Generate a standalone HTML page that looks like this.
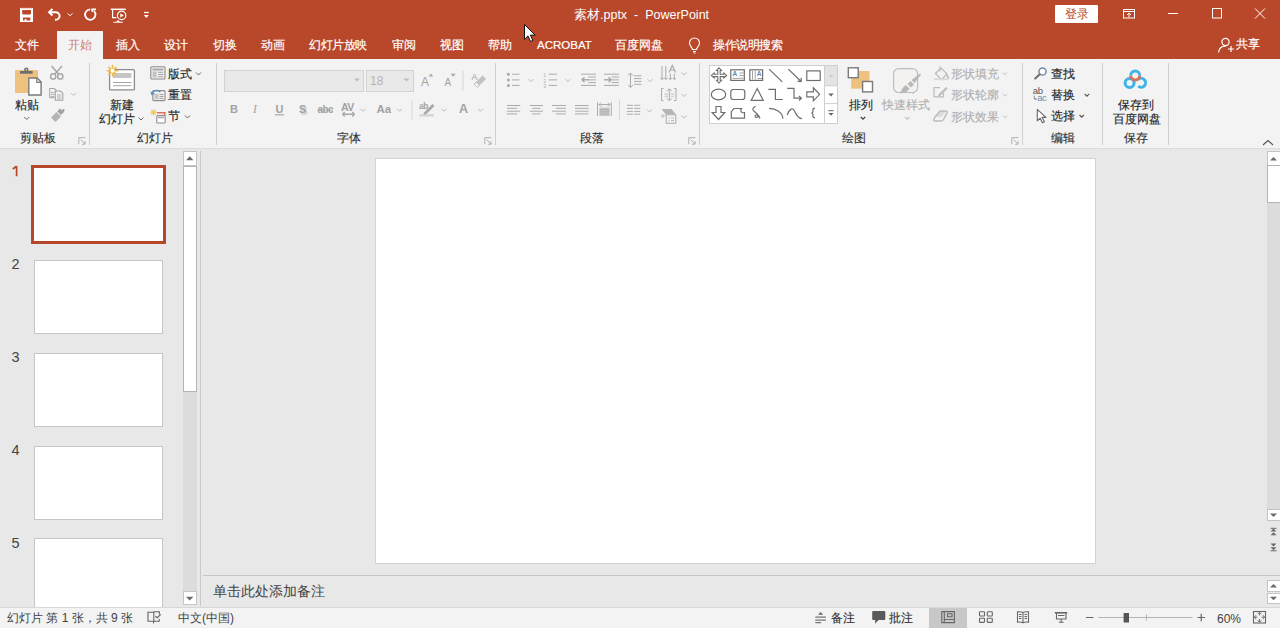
<!DOCTYPE html>
<html><head><meta charset="utf-8">
<style>
*{box-sizing:border-box;margin:0;padding:0}
html,body{width:1280px;height:628px;overflow:hidden;background:#e8e8e8;font-family:"Liberation Sans",sans-serif;position:relative}
.a{position:absolute}
.t{position:absolute;white-space:nowrap;line-height:1}
#title{left:0;top:0;width:1280px;height:59px;background:#b9482b}
#tabsel{left:57px;top:31px;width:46px;height:29px;background:#f3f3f3}
.tab{color:#fff;font-size:12px;top:39px;-webkit-text-stroke:0.2px #fff}
#ribbon{left:0;top:59px;width:1280px;height:89px;background:#f3f3f3}
.vs{position:absolute;width:1px;background:#d0d0d0}
.gl{font-size:12px;color:#333;top:132px;-webkit-text-stroke:0.15px #333}
.rt{font-size:12px;color:#262626;-webkit-text-stroke:0.15px #262626}
.dis{color:#b0b0b0;-webkit-text-stroke:0.15px #b0b0b0}
.dis{color:#b0b0b0}
#pane{left:0;top:149px;width:200px;height:457px;background:#e8e8e8}
.thumb{position:absolute;background:#fff;border:1px solid #c6c6c6}
.num{position:absolute;font-size:14.5px;color:#444;line-height:1}
#status{left:0;top:606px;width:1280px;height:22px;background:#f3f3f3}
.st{font-size:12px;color:#444;top:611px}
</style></head><body>
<div id="title" class="a"></div>
<div id="tabsel" class="a"></div>
<!-- QAT -->
<svg class="a" style="left:0;top:0" width="160" height="31" viewBox="0 0 160 31">
 <path d="M20 8h13v14h-13z M22.2 10h8.8v3.6c0 .5-.3.8-.8.8h-7.2c-.5 0-.8-.3-.8-.8z M23 17.4h7.3v3h-3.8v-1.5h-1.8v1.5h-1.7z" fill="#fff" fill-rule="evenodd"/>
 <path d="M20.5 8.3h12" stroke="#e8b9aa" stroke-width="0.8"/>
 <g fill="none" stroke="#fff" stroke-width="1.9">
  <path d="M49.5 12.2h6.3a3.8 3.8 0 0 1 0 7.6h-0.8"/>
  <path d="M52.5 8.9l-3.5 3.3 3.5 3.3"/>
 </g>
 <path d="M67.7 13.4l2.4 2.4 2.4-2.4" fill="none" stroke="#fff" stroke-width="1"/>
 <g fill="none" stroke="#fff" stroke-width="1.8">
  <path d="M93.8 10.8a5.2 5.2 0 1 1 -3.6 -1.4"/>
  <path d="M92.2 8.6v3.2M91.6 9.4h4.4"/>
 </g>
 <g fill="none" stroke="#fff">
  <path d="M110.8 9.3h14.9" stroke-width="1.5"/>
  <path d="M112.6 9.8v7.9h3.8" stroke-width="1.2"/>
  <circle cx="121.6" cy="15.4" r="4.2" stroke-width="1.2"/>
  <path d="M113.4 22.3h9.4M116.5 22.3l1.6-1.6 1.6 1.6" stroke-width="1.1"/>
 </g>
 <path d="M120.3 13.2v4.4l3.4-2.2z" fill="#fff"/>
 <path d="M143.9 12.5h4.9" stroke="#fff" stroke-width="1.3"/>
 <path d="M143.9 15.1h4.9l-2.45 2.9z" fill="#fff"/>
</svg>
<div class="t" style="left:574px;top:9px;font-size:12.5px;color:#fff">素材.pptx&nbsp; - &nbsp;PowerPoint</div>
<div class="a" style="left:1055px;top:5px;width:43px;height:18px;background:#fff;border-radius:1px"></div>
<div class="t" style="left:1065px;top:8px;font-size:12px;color:#b7472a">登录</div>
<svg class="a" style="left:1110px;top:0" width="170" height="60" viewBox="1110 0 170 60" fill="none" stroke="#fff" stroke-width="1">
 <rect x="1123.5" y="9.5" width="11" height="8.5"/><path d="M1124 11.5h10M1129 17.5v-4.5M1127 15l2-2 2 2"/>
 <path d="M1168 13.5h10"/>
 <rect x="1212.5" y="8.5" width="9" height="9.5"/>
 <path d="M1255 8.5l10 10M1265 8.5l-10 10"/>
 <circle cx="1225.5" cy="42" r="3.6" stroke-width="1.2"/><path d="M1218.5 52.5c.5-4 3.3-6.3 7-6.3" stroke-width="1.2"/><path d="M1231 46v6M1228 49h6" stroke-width="1.2"/>
</svg>
<div class="t" style="left:1236px;top:38px;font-size:12px;color:#fff;-webkit-text-stroke:0.2px #fff">共享</div>
<!-- tabs -->
<div class="t tab" style="left:15px">文件</div>
<div class="t tab" style="left:68px;color:#b7472a">开始</div>
<div class="t tab" style="left:116px">插入</div>
<div class="t tab" style="left:164px">设计</div>
<div class="t tab" style="left:213px">切换</div>
<div class="t tab" style="left:261px">动画</div>
<div class="t tab" style="left:309px;letter-spacing:-0.4px">幻灯片放映</div>
<div class="t tab" style="left:392px">审阅</div>
<div class="t tab" style="left:440px">视图</div>
<div class="t tab" style="left:488px">帮助</div>
<div class="t tab" style="left:537px;font-size:11.5px;top:40px">ACROBAT</div>
<div class="t tab" style="left:615px">百度网盘</div>
<div class="t tab" style="left:713px;letter-spacing:-0.5px">操作说明搜索</div>
<svg class="a" style="left:685px;top:36px" width="20" height="20" fill="none" stroke="#fff" stroke-width="1.1">
 <path d="M7.5 13.5c0-2-3-3.3-3-6.5a5 5 0 0 1 10 0c0 3.2-3 4.5-3 6.5z"/><path d="M8 15.5h3M8.5 17h2"/>
</svg>
<!-- ribbon -->
<div id="ribbon" class="a"></div>
<div class="a" style="left:0;top:148px;width:1280px;height:1px;background:#dcdcdc"></div>
<!-- font boxes -->
<div class="a" style="left:224px;top:70px;width:140px;height:22px;background:#e9e9e9;border:1px solid #d2d2d2"></div>
<div class="a" style="left:366px;top:70px;width:48px;height:22px;background:#e9e9e9;border:1px solid #d2d2d2"></div>
<div class="t" style="left:370px;top:75px;font-size:12px;color:#b5b5b5">18</div>
<!-- separators -->
<div class="vs" style="left:89px;top:63px;height:82px"></div>
<div class="vs" style="left:216px;top:63px;height:82px"></div>
<div class="vs" style="left:495px;top:63px;height:82px"></div>
<div class="vs" style="left:699px;top:63px;height:82px"></div>
<div class="vs" style="left:1022px;top:63px;height:82px"></div>
<div class="vs" style="left:1102px;top:63px;height:82px"></div>
<div class="vs" style="left:1168px;top:63px;height:82px"></div>
<!-- group labels -->
<div class="t gl" style="left:20px">剪贴板</div>
<div class="t gl" style="left:137px">幻灯片</div>
<div class="t gl" style="left:337px">字体</div>
<div class="t gl" style="left:580px">段落</div>
<div class="t gl" style="left:842px">绘图</div>
<div class="t gl" style="left:1051px">编辑</div>
<div class="t gl" style="left:1124px">保存</div>
<!-- ribbon icons -->
<svg class="a" style="left:0;top:0" width="1280" height="150" viewBox="0 0 1280 150">
<defs>
 <path id="car" d="M0 0l2.5 2.5 2.5-2.5" fill="none" stroke="#666" stroke-width="1"/>
 <path id="card" d="M0 0l2.5 2.5 2.5-2.5" fill="none" stroke="#bcbcbc" stroke-width="1"/>
</defs>
<!-- paste -->
<rect x="15" y="70" width="23" height="23" rx="1.2" fill="#eec27e"/>
<path d="M20 71h12.6v2.7h-12.6z" fill="#6b6e73"/>
<circle cx="26.3" cy="69.6" r="2.2" fill="#6b6e73"/><circle cx="26.3" cy="69.6" r="0.9" fill="#eec27e"/>
<path d="M28.8 78h8.3l4 4v13h-12.3z" fill="#fff" stroke="#7a7a7a" stroke-width="1.4"/>
<path d="M36.8 78v4.4h4.2" fill="none" stroke="#7a7a7a" stroke-width="1.2"/>
<use href="#car" x="24.3" y="117"/>
<!-- scissors -->
<g fill="none" stroke="#a8a8a8" stroke-width="1.5">
 <path d="M51.5 66l7.3 8.2M62 66l-7.3 8.2"/>
 <circle cx="53.2" cy="76.4" r="2.6"/><circle cx="60.3" cy="76.4" r="2.6"/>
</g>
<!-- copy -->
<g fill="#f3f3f3" stroke="#a8a8a8" stroke-width="1.1">
 <path d="M49.7 88.5h4.6l2.3 2.3v7h-6.9z"/>
 <path d="M55.3 91h5.2l2.3 2.3v7h-7.5z"/>
</g>
<g stroke="#a8a8a8" stroke-width="0.9"><path d="M51 92.5h3.5M51 94.5h3.5M51 96.5h3M57 95h4.3M57 97h4.3M57 99h4.3"/></g>
<use href="#card" x="71" y="93"/>
<!-- format painter -->
<g fill="#b4b4b4">
 <path d="M51 117.5l5.5-5.5 4.5 4.5-5.5 5.5z" />
 <path d="M57.3 111.3l2.7-2.7 3.6 3.6-2.7 2.7z" fill="#a0a0a0"/>
 <path d="M61.5 110l2.2-1 1 1-1 2.2z" fill="#9a9a9a"/>
</g>
<!-- new slide -->
<rect x="109.6" y="69.7" width="24.8" height="20.2" rx="1" fill="#fff" stroke="#8c8c8c" stroke-width="1.3"/>
<rect x="113" y="73" width="18.4" height="5" fill="#c6c6c6"/>
<path d="M113 82.5h18.4M113 85.7h18.4" stroke="#9a9a9a" stroke-width="0.9"/>
<g stroke="#f2b94d" stroke-width="1.6" stroke-linecap="round">
 <path d="M112.5 65.6v10.4M107.3 70.8h10.4M108.9 67.2l7.2 7.2M116.1 67.2l-7.2 7.2"/>
</g>
<circle cx="112.5" cy="70.8" r="2" fill="#fff"/>
<use href="#car" x="138.5" y="117.5"/>
<!-- layout -->
<rect x="150.8" y="66.8" width="14.2" height="12.2" rx="1" fill="#f0f0f0" stroke="#8c8c8c" stroke-width="1.1"/>
<rect x="152.5" y="68.5" width="10.8" height="2" fill="#a8a8a8"/>
<rect x="152.5" y="71.5" width="4.2" height="6" fill="#c4c4c4"/>
<path d="M158 72.3h5.3M158 74.5h5.3M158 76.7h5.3" stroke="#9a9a9a" stroke-width="0.9"/>
<use href="#car" x="196" y="72.5"/>
<!-- reset -->
<rect x="152.8" y="90.6" width="12.2" height="10" rx="1" fill="#f0f0f0" stroke="#8c8c8c" stroke-width="1.1"/>
<rect x="154.5" y="94" width="4" height="5.2" fill="#c4c4c4"/>
<path d="M159.5 94.5h4M159.5 96.5h4M159.5 98.5h4" stroke="#9a9a9a" stroke-width="0.9"/>
<path d="M151.5 94.5c0.5-4 6-5.5 8.8-2.4" fill="none" stroke="#5e8fbd" stroke-width="1.5"/>
<path d="M150.3 91.5l1.3 3.8 3.6-1.6z" fill="#5e8fbd"/>
<!-- section -->
<g stroke="#f2c462" stroke-width="1.1" stroke-linecap="round">
 <path d="M153.5 109.5v5.6M150.7 112.3h5.6M151.5 110.3l4 4M155.5 110.3l-4 4"/>
</g>
<path d="M157 112.8h7.8v2.5" fill="none" stroke="#e0705e" stroke-width="1.6"/>
<rect x="156.8" y="115.6" width="8.4" height="7.4" rx="0.8" fill="#fff" stroke="#8c8c8c" stroke-width="1.1"/>
<rect x="158" y="116.8" width="6" height="1.6" fill="#b0b0b0"/>
<use href="#car" x="185" y="115.5"/>
</svg>
<!-- font group glyphs -->
<div class="t" style="left:230px;top:104px;font-size:11px;font-weight:bold;color:#a2a2a2">B</div>
<div class="t" style="left:253px;top:104px;font-size:11.5px;font-style:italic;font-family:'Liberation Serif',serif;color:#a2a2a2">I</div>
<div class="t" style="left:275.5px;top:104px;font-size:11px;font-weight:bold;color:#a2a2a2">U</div>
<div class="t" style="left:299px;top:104px;font-size:11px;font-weight:bold;color:#a2a2a2;text-shadow:1.5px 1.5px 1px #cfcfcf">S</div>
<div class="t" style="left:317.5px;top:105px;font-size:10px;font-weight:bold;color:#a2a2a2;letter-spacing:-0.6px">abc</div>
<div class="t" style="left:341px;top:102px;font-size:10.5px;font-weight:bold;color:#a2a2a2;letter-spacing:-0.6px">AV</div>
<div class="t" style="left:376.5px;top:104px;font-size:11.5px;font-weight:bold;color:#a2a2a2">Aa</div>
<div class="t" style="left:459px;top:103px;font-size:12.5px;font-weight:bold;color:#a2a2a2">A</div>
<div class="t" style="left:421px;top:76px;font-size:12px;color:#a2a2a2">A</div>
<div class="t" style="left:444.5px;top:78px;font-size:10px;color:#a2a2a2">A</div>
<div class="t" style="left:419px;top:102px;font-size:8.5px;font-weight:bold;color:#a2a2a2;letter-spacing:-0.4px">ab</div>
<div class="t" style="left:471.5px;top:73px;font-size:9px;color:#a2a2a2">A</div>
<svg class="a" style="left:0;top:0" width="1280" height="150" viewBox="0 0 1280 150">
 <path d="M354 78.5l3 3 3-3z" fill="#bdbdbd"/>
 <path d="M403.5 78.5l3 3 3-3z" fill="#bdbdbd"/>
 <path d="M428.7 76.5l2.2-3 2.2 3z" fill="#a8a8a8"/>
 <path d="M450.6 73.8h5.2l-2.6 3z" fill="#a8a8a8"/>
 <rect x="462.5" y="71" width="1" height="20" fill="#d6d6d6"/>
 <rect x="411.5" y="100.5" width="1" height="19" fill="#d6d6d6"/>
 <path d="M476 82l6.5-6.5 3.5 3.5-6.5 6.5z" fill="#c2c2c2"/>
 <path d="M474 84l2-2 3.5 3.5-2 2z" fill="none" stroke="#c2c2c2" stroke-width="1"/>
 <rect x="275" y="114.2" width="9" height="1.2" fill="#a8a8a8"/>
 <rect x="317.5" y="109.6" width="15.5" height="1" fill="#a8a8a8"/>
 <path d="M342.5 114.2h12M342.5 114.2l2.2-2.2M342.5 114.2l2.2 2.2M354.5 114.2l-2.2-2.2M354.5 114.2l-2.2 2.2" stroke="#a8a8a8" stroke-width="1.4" fill="none"/>
 <path d="M424 112.5l8.5-8.5 2 2-8.5 8.5-2.8.8z" fill="#a8a8a8"/>
 <rect x="419.5" y="114.2" width="14.5" height="2.3" fill="#d4d4d4"/>
 <use href="#card" x="360.5" y="108.8"/>
 <use href="#card" x="397" y="108.8"/>
 <use href="#card" x="441.3" y="108.8"/>
 <use href="#card" x="478" y="108.8"/>
 <!-- launchers -->
 <g fill="none" stroke="#a8a8a8" stroke-width="0.9">
  <path d="M78.8 144.2v-6.5h6.5M80.8 139.7l4.2 4.2M85 141.2v3h-3"/>
  <path d="M484.8 144.2v-6.5h6.5M486.8 139.7l4.2 4.2M491 141.2v3h-3"/>
  <path d="M688.8 144.2v-6.5h6.5M690.8 139.7l4.2 4.2M695 141.2v3h-3"/>
  <path d="M1011.8 144.2v-6.5h6.5M1013.8 139.7l4.2 4.2M1018 141.2v3h-3"/>
 </g>
 <path d="M1263 145l5-4.5 5 4.5" fill="none" stroke="#555" stroke-width="1.1"/>
</svg>
<!-- paragraph icons -->
<svg class="a" style="left:0;top:0" width="1280" height="150" viewBox="0 0 1280 150">
<g fill="#a8a8a8">
 <circle cx="508.4" cy="74.2" r="1.5"/><circle cx="508.4" cy="79.9" r="1.5"/><circle cx="508.4" cy="85.4" r="1.5"/>
</g>
<g stroke="#ababab" stroke-width="1" fill="none">
 <path d="M512 74.2h7.6M512 79.9h7.6M512 85.4h7.6"/>
 <path d="M548.7 74.2h8.4M548.7 79.9h8.4M548.7 85.4h8.4"/>
 <path d="M581 74.2h15M588.3 77h7.7M588.3 79.9h7.7M588.3 82.6h7.7M581 85.4h15"/>
 <path d="M589 79.8h-7M584.5 77.3l-2.6 2.5 2.6 2.5" stroke-width="1.4"/>
 <path d="M604 74.2h15M611.5 77h7.5M611.5 79.9h7.5M611.5 82.6h7.5M604 85.4h15"/>
 <path d="M604 79.8h7M608.5 77.3l2.6 2.5-2.6 2.5" stroke-width="1.4"/>
 <path d="M630.5 73v14.5M628 75.5l2.5-2.5 2.5 2.5M628 85l2.5 2.5 2.5-2.5"/>
 <path d="M634 75.8h7.5M634 78.6h7.5M634 81.4h7.5M634 84.3h7.5"/>
 <path d="M662 66v13.5M665.8 66v13.5M660.3 77.8l1.7 1.8 1.7-1.8M664.1 77.8l1.7 1.8 1.7-1.8M670.3 73.5v6M674.3 73.5v6M668.8 78l1.5 1.6 1.5-1.6M672.8 78l1.5 1.6 1.5-1.6"/>
 <path d="M669 72.5l3.3-7 3.3 7M670.2 70h4.2" stroke-width="1.2"/>
 <path d="M663.5 88.5h-2v12h2M674 88.5h2v12h-2M669.3 89v11M667 91l2.3-2.3 2.3 2.3M667 98.5l2.3 2.3 2.3-2.3"/>
 <path d="M664.5 94h3.5M670.8 94h3.5M664.5 96.2h3.5M670.8 96.2h3.5" stroke="#c4c4c4"/>
 <path d="M506.9 105.5h13.3M506.9 108.3h10.1M506.9 111.2h13.3M506.9 113.9h10.1"/>
 <path d="M529.8 105.5h13.2M532.2 108.3h8.4M529.8 111.2h13.2M532.2 113.9h8.4"/>
 <path d="M552 105.5h13.9M555.8 108.3h10.1M552 111.2h13.9M555.8 113.9h10.1"/>
 <path d="M575 105.5h13.6M575 108.3h13.6M575 111.2h13.6M575 113.9h13.6"/>
 <path d="M597.5 102.3v13.7M611.3 102.3v13.7M599 104.6h11M601 102.6l-2 2 2 2M608 102.6l2 2-2 2"/>
 <path d="M627 105.3h6M627 108.4h6M627 111.4h6M627 114.2h6M634.2 105.3h6M634.2 108.4h6M634.2 111.4h6M634.2 114.2h6"/>
</g>
<rect x="599.5" y="107.5" width="10" height="8.5" fill="#c8c8c8"/>
<path d="M599.5 109.5h10M599.5 111.8h10M599.5 114h10" stroke="#a8a8a8" stroke-width="0.8"/>
<rect x="619" y="100.2" width="1" height="19.4" fill="#d6d6d6"/>
<text x="543.5" y="77" font-size="4.5" fill="#a8a8a8" font-family="Liberation Sans">1</text>
<text x="543.5" y="82.5" font-size="4.5" fill="#a8a8a8" font-family="Liberation Sans">2</text>
<text x="543.5" y="88" font-size="4.5" fill="#a8a8a8" font-family="Liberation Sans">3</text>
<!-- smartart -->
<path d="M661.5 109h10l4 5h-10z" fill="#b4b4b4"/>
<path d="M661.5 114.5h4l-2 3h-2z" fill="#c8c8c8"/>
<rect x="666.2" y="114.8" width="9.6" height="8.4" fill="#f3f3f3" stroke="#a8a8a8" stroke-width="1"/>
<path d="M668.5 118h1M671 118h3M668.5 120.5h1M671 120.5h3" stroke="#a8a8a8" stroke-width="0.8"/>
<use href="#card" x="528.6" y="79.2"/>
<use href="#card" x="565.4" y="79.2"/>
<use href="#card" x="647.6" y="79.2"/>
<use href="#card" x="681.7" y="72.5"/>
<use href="#card" x="681.7" y="94"/>
<use href="#card" x="681.7" y="115.5"/>
<use href="#card" x="647" y="109.5"/>
</svg>
<!-- drawing/editing icons -->
<svg class="a" style="left:0;top:0" width="1280" height="150" viewBox="0 0 1280 150">
 <!-- arrange -->
 <path d="M851.2 71h18.3v17.7h-18.3z" fill="#eec27e"/>
 <rect x="848.3" y="67.8" width="9.9" height="9.9" fill="#fff" stroke="#7a7a7a" stroke-width="1.4"/>
 <rect x="862.6" y="81.5" width="9.9" height="10.4" fill="#fff" stroke="#7a7a7a" stroke-width="1.4"/>
 <path d="M860.8 117l2.2 2.2 2.2-2.2" fill="none" stroke="#444" stroke-width="1.3"/>
 <!-- quick styles -->
 <rect x="893.6" y="68.7" width="24" height="23.8" rx="5" fill="#f4f1f1" stroke="#bdbdbd" stroke-width="1.2"/>
 <path d="M900 93.5c1.5-4 3-6.5 6-8.5l3.5 3.5c-2 3-4.5 4.5-9.5 5z" fill="#b8b8b8"/>
 <path d="M907.5 84l3-3 3.5 3.5-3 3z" fill="#b8b8b8"/>
 <path d="M911.5 80l8.5-6.5 1 1-6.5 8.5z" fill="#b8b8b8"/>
 <path d="M916 91c-1 1.5-2.5 2.5-4 3" fill="none" stroke="#d0d0d0" stroke-width="1"/>
 <path d="M905 117l2.2 2.2 2.2-2.2" fill="none" stroke="#c4c4c4" stroke-width="1.1"/>
 <!-- shape fill -->
 <path d="M935.5 73.5l5.5-5.5 6 6-5.5 5.5z" fill="none" stroke="#bcbcbc" stroke-width="1.3"/>
 <path d="M940 66.5v5" stroke="#bcbcbc" stroke-width="1.2"/>
 <path d="M946.5 74.5c1.5 1.5 2 3 1.5 4.5" stroke="#bcbcbc" stroke-width="1.6" fill="none"/>
 <rect x="934" y="78.3" width="14.5" height="1.8" fill="#dadada"/>
 <!-- shape outline -->
 <path d="M940 87.6h-6v9.3h9.5v-4" fill="none" stroke="#bcbcbc" stroke-width="1.2"/>
 <path d="M938.5 94.5l7.5-7.5 1.6 1.6-7.5 7.5-2.3.7z" fill="#bcbcbc"/>
 <!-- shape effects -->
 <path d="M935 117l5-6h6.5l-5 6z" fill="#dcdcdc"/>
 <path d="M935 117l5-6h6c1 0 1.5 1 1 2l-3.5 6.5c-.5 1-1.5 1.5-2.5 1.5h-6c-1 0-1.5-1-1-2z" fill="none" stroke="#bcbcbc" stroke-width="1.5"/>
 <g fill="none" stroke="#c4c4c4" stroke-width="1"><path d="M1002.7 72.5l2.2 2.2 2.2-2.2M1002.7 94l2.2 2.2 2.2-2.2M1002.7 115.5l2.2 2.2 2.2-2.2"/></g>
 <!-- find -->
 <circle cx="1042.5" cy="71.5" r="3.6" fill="#fff" stroke="#6e8aa6" stroke-width="1.5"/>
 <path d="M1039.8 74.3l-4.6 4.3" stroke="#6e6e6e" stroke-width="2" stroke-linecap="round"/>
 <!-- replace -->
 <text x="1032.8" y="94.3" font-size="9.5" font-family="Liberation Sans" fill="#555" letter-spacing="-0.4">ab</text>
 <text x="1037.2" y="100.9" font-size="9.5" font-family="Liberation Sans" fill="#6a8cb2" letter-spacing="-0.4">ac</text>
 <path d="M1034.3 95.5v3.5h2M1035.3 98l1 1-1 1" fill="none" stroke="#777" stroke-width="0.8"/>
 <path d="M1084.6 93.8l2.3 2.3 2.3-2.3" fill="none" stroke="#555" stroke-width="1.1"/>
 <!-- select -->
 <path d="M1037.3 109.3v11.5l2.8-2.6 2.3 4.5 2-1-2.3-4.3h3.8z" fill="#fff" stroke="#666" stroke-width="1.1" stroke-linejoin="round"/>
 <path d="M1079.5 115l2.2 2.2 2.2-2.2" fill="none" stroke="#555" stroke-width="1.1"/>
 <!-- baidu -->
 <g fill="none" stroke-width="3">
  <circle cx="1129.6" cy="83" r="4.5" stroke="#3eb4e8"/>
  <path d="M1138.2 86.2a4.5 4.5 0 1 0 -0.4 -6.6" stroke="#3eb4e8"/>
  <path d="M1130.7 75.6a4.5 4.5 0 0 1 9 0" stroke="#3eb4e8"/>
  <path d="M1139.7 75.6a4.5 4.5 0 0 1 -9 0" stroke="#d5735b"/>
 </g>
</svg>
<!-- clipboard -->
<div class="t rt" style="left:15px;top:99px">粘贴</div>
<div class="t rt" style="left:110px;top:99px">新建</div>
<div class="t rt" style="left:99px;top:113px">幻灯片</div>
<div class="t rt" style="left:168px;top:68px">版式</div>
<div class="t rt" style="left:168px;top:89px">重置</div>
<div class="t rt" style="left:168px;top:110px">节</div>
<div class="t rt" style="left:849px;top:99px">排列</div>
<div class="t rt dis" style="left:882px;top:99px">快速样式</div>
<div class="t rt dis" style="left:951px;top:68px">形状填充</div>
<div class="t rt dis" style="left:951px;top:89px">形状轮廓</div>
<div class="t rt dis" style="left:951px;top:111px">形状效果</div>
<div class="t rt" style="left:1051px;top:68px">查找</div>
<div class="t rt" style="left:1051px;top:89px">替换</div>
<div class="t rt" style="left:1051px;top:110px">选择</div>
<div class="t rt" style="left:1118px;top:99px">保存到</div>
<div class="t rt" style="left:1113px;top:113px">百度网盘</div>
<!-- gallery -->
<div class="a" style="left:709px;top:65px;width:129px;height:59px;background:#fff;border:1px solid #cfcfcf"></div>
<div class="a" style="left:824px;top:66px;width:13px;height:20px;background:#e3e3e3"></div>
<svg class="a" style="left:0;top:0" width="1280" height="150" viewBox="0 0 1280 150">
 <path d="M824.5 65.5v58M824.5 85.8h13M824.5 103.6h13" stroke="#d0d0d0" stroke-width="1" fill="none"/>
 <path d="M828.5 77l2.5-2.5 2.5 2.5z" fill="#c8c8c8"/>
 <path d="M828.3 93.6h5.4l-2.7 2.8z" fill="#666"/>
 <path d="M828.3 110.7h5.4" stroke="#666" stroke-width="1"/>
 <path d="M828.3 112.9h5.4l-2.7 2.8z" fill="#666"/>
 <g fill="none" stroke="#6e6e6e" stroke-width="1.2" stroke-linejoin="miter">
  <path d="M719.0 67.8 L721.5 70.5 L720.2 70.5 L720.2 74.2 L723.9 74.2 L723.9 72.9 L726.6 75.4 L723.9 77.9 L723.9 76.6 L720.2 76.6 L720.2 80.3 L721.5 80.3 L719.0 83.0 L716.5 80.3 L717.8 80.3 L717.8 76.6 L714.1 76.6 L714.1 77.9 L711.4 75.4 L714.1 72.9 L714.1 74.2 L717.8 74.2 L717.8 70.5 L716.5 70.5z" stroke-width="1.1"/>
  <rect x="730.8" y="69.8" width="13.5" height="10.6"/>
  <rect x="749.8" y="69.8" width="12.8" height="10.6"/>
  <path d="M769.1 69.1l13.2 12.8"/>
  <path d="M788.3 69.1l12.6 12.2M797.5 81.4h3.7v-3.7"/>
  <rect x="806.8" y="70.9" width="13.4" height="9.6"/>
  <ellipse cx="718.5" cy="94.5" rx="7.2" ry="5.3"/>
  <rect x="730.8" y="89.5" width="14" height="10" rx="2.5"/>
  <path d="M757.2 88.5l6 11.8h-12z"/>
  <path d="M768.3 89.3h7.1v10.2h7.5"/>
  <path d="M787.2 88.3h6.8v9.9h7.3M799 95.9l2.4 2.3-2.4 2.3"/>
  <path d="M806.8 91.8h6.6v-4l6.2 6.5-6.2 6.5v-4h-6.6z"/>
  <path d="M716 106.5h5v6h3.8l-6.3 7-6.3-7h3.8z"/>
  <path d="M734 108.5h7.5c-2 2 0 5 3 4v5.6h-13.2v-6.5z"/>
  <path d="M755.5 106.2c-2.5 1.5-3.5 3-2 4.5l3.8 3.2c1.5 1.4 1 3.6-1 3.6-1.6 0-1.6-2.2 0-2.6 2-.4 3 1.2 3.6 3.6"/>
  <path d="M769.1 108.4c7 0 13.5 4 13.8 10.2"/>
  <path d="M787.2 115c2-6 5-7.5 7-4.5 2.5 4 3 8 7.7 8.1"/>
  <path d="M815 108.2c-1.5 0-2.1.5-2.1 1.8v1.8c0 .8-.5 1.2-1.6 1.2 1.1 0 1.6.4 1.6 1.2v1.8c0 1.3.6 1.8 2.1 1.8"/>
 </g>
 <g fill="#6a86a3" font-family="Liberation Sans" font-weight="bold">
  <text x="732.4" y="76.2" font-size="6.5">A</text>
  <text x="756.8" y="76.2" font-size="6.5">A</text>
 </g>
 <path d="M739.5 73h4M739.5 75.5h4M732.5 78.3h11M752.5 71v8.5M755.2 71v8.5M757.5 78.5h4.5" stroke="#8a8a8a" stroke-width="0.8"/>
</svg>
<!-- left pane -->
<div id="pane" class="a"></div>
<svg class="a" style="left:10px;top:162px" width="12" height="18" viewBox="10 162 12 18"><path d="M16.6 166v10.2M16.6 166.2l-3.8 2.8" fill="none" stroke="#b7472a" stroke-width="1.7"/></svg>
<div class="a" style="left:31px;top:165px;width:135px;height:79px;border:3px solid #b7472a;background:#fff"></div>
<div class="num" style="left:11.5px;top:256.5px">2</div><div class="thumb" style="left:34px;top:260px;width:129px;height:74px"></div>
<div class="num" style="left:11.5px;top:349.5px">3</div><div class="thumb" style="left:34px;top:353px;width:129px;height:74px"></div>
<div class="num" style="left:11.5px;top:442.5px">4</div><div class="thumb" style="left:34px;top:446px;width:129px;height:74px"></div>
<div class="num" style="left:11.5px;top:535.5px">5</div><div class="thumb" style="left:34px;top:538px;width:129px;height:74px"></div>
<!-- main slide -->
<div class="a" style="left:375px;top:158px;width:721px;height:406px;background:#fff;border:1px solid #d2d2d2"></div>
<!-- thumb pane scrollbar -->
<div class="a" style="left:183px;top:151px;width:14px;height:454px;background:#dcdcdc"></div>
<div class="a" style="left:183px;top:151px;width:14px;height:15px;background:#fff;border:1px solid #c4c4c4"></div>
<div class="a" style="left:183px;top:166px;width:14px;height:226px;background:#fff;border:1px solid #b4b4b4"></div>
<div class="a" style="left:183px;top:591px;width:14px;height:14px;background:#fff;border:1px solid #c4c4c4"></div>
<div class="a" style="left:200px;top:151px;width:1px;height:455px;background:#c8c8c8"></div>
<!-- notes -->
<div class="a" style="left:203px;top:575px;width:1077px;height:1px;background:#c6c6c6"></div>
<div class="t" style="left:213px;top:584px;font-size:14px;color:#444">单击此处添加备注</div>
<!-- right scrollbar -->
<div class="a" style="left:1267px;top:151px;width:13px;height:370px;background:#dcdcdc"></div>
<div class="a" style="left:1267px;top:151px;width:13px;height:16px;background:#fff;border:1px solid #c4c4c4;border-right:0"></div>
<div class="a" style="left:1267px;top:165px;width:13px;height:38px;background:#fff;border:1px solid #b4b4b4;border-right:0"></div>
<div class="a" style="left:1267px;top:509px;width:13px;height:12px;background:#fff;border:1px solid #c4c4c4;border-right:0"></div>
<div class="a" style="left:1267px;top:580px;width:13px;height:12px;background:#fff;border:1px solid #c4c4c4;border-right:0"></div>
<div class="a" style="left:1267px;top:593px;width:13px;height:11px;background:#fff;border:1px solid #c4c4c4;border-right:0"></div>
<svg class="a" style="left:0;top:140px" width="1280" height="488" viewBox="0 140 1280 488">
 <g fill="#6a6a6a">
  <path d="M186 160.2l3.7-3.9 3.7 3.9z"/>
  <path d="M186 596.8h7.4l-3.7 3.6z"/>
  <path d="M1270 160.5l3.5-3.6 3.5 3.6z"/>
  <path d="M1270 513.5h7l-3.5 3.5z"/>
  <path d="M1270.5 531.5l3-3 3 3zM1270.5 535.3l3-3 3 3z"/>
  <path d="M1270.5 543.5h6l-3 3zM1270.5 547.3h6l-3 3z"/>
  <path d="M1270 587.5l3.5-3.5 3.5 3.5z"/>
  <path d="M1270 596.8h7l-3.5 3.4z"/>
 </g>
 <path d="M1270.5 528.3h6M1276.5 550.8h-6" stroke="#6a6a6a" stroke-width="1"/>
</svg>
<!-- status -->
<div class="a" style="left:0;top:607px;width:1280px;height:21px;background:#f3f3f3;border-top:1px solid #d8d8d8"></div>
<div class="t st" style="left:7px;top:612px">幻灯片 第 1 张，共 9 张</div>
<div class="t st" style="left:178px;top:612px">中文(中国)</div>
<div class="a" style="left:929px;top:608px;width:38px;height:20px;background:#c8c8c8"></div>
<div class="t st" style="left:831px;top:612px;color:#333;-webkit-text-stroke:0.15px #333">备注</div>
<div class="t st" style="left:889px;top:612px;color:#333;-webkit-text-stroke:0.15px #333">批注</div>
<div class="t st" style="left:1217px;font-size:12px;top:612.5px">60%</div>
<svg class="a" style="left:0;top:600px" width="1280" height="28" viewBox="0 600 1280 28">
 <g fill="none" stroke="#666" stroke-width="1.1">
  <path d="M153.6 612.2h-5.6v9h5.2l.4 1.2.4-1.2h5.2v-2.5M153.6 612.2l.4-.5h5.4v2.8M153.8 612v10"/>
  <path d="M155.4 616.2l1.8 1.6 3.6-3.4" stroke-width="1.2"/>
  <path d="M941.8 611.6h12.6v11h-12.6zM944.3 611.6v11M944.3 619.5h10.1M947.5 613.8h4.5v3h-4.5z"/>
  <rect x="979.5" y="611.8" width="5" height="4.2" rx="0.6"/><rect x="987.3" y="611.8" width="5" height="4.2" rx="0.6"/><rect x="979.5" y="618.2" width="5" height="4.2" rx="0.6"/><rect x="987.3" y="618.2" width="5" height="4.2" rx="0.6"/>
  <path d="M1023 612.5c-1.5-.7-3.5-.9-5.5-.6v10.3c2-.3 4-.1 5.5.6 1.5-.7 3.5-.9 5.5-.6v-10.3c-2-.3-4-.1-5.5.6zM1023 612.5v10.3M1019 614.5h2.5M1019 616.5h2.5M1019 618.5h2.5M1024.5 614.5h2.5M1024.5 616.5h2.5M1024.5 618.5h2.5"/>
  <path d="M1056.5 613.2v5.8h9.5v-5.8M1061.2 619v2.8M1058.8 622.2h4.8M1058 615.5h6.5"/>
  <rect x="1253.5" y="611.5" width="12" height="11.5"/>
  <path d="M1259.5 612.5v3M1257.5 614l2-1.5 2 1.5M1259.5 622v-3M1257.5 620.5l2 1.5 2-1.5M1254.5 617.2h3M1256 615.2l-1.5 2 1.5 2M1264.5 617.2h-3M1263 615.2l1.5 2-1.5 2" stroke-width="0.9"/>
 </g>
 <path d="M1054.8 612h12.4v1.6h-12.4z" fill="#666"/>
 <path d="M818.1 614.8l2.5-2.8 2.5 2.8z" fill="#666"/>
 <path d="M815.3 617.2h10.6M815.3 620.1h10.6M815.3 622.6h5.8" stroke="#777" stroke-width="1.2"/>
 <path d="M873.5 611h10.5c.8 0 1.3.5 1.3 1.3v6.5c0 .8-.5 1.3-1.3 1.3h-5.5l-3.3 3.7v-3.7h-1.7c-.8 0-1.3-.5-1.3-1.3v-6.5c0-.8.5-1.3 1.3-1.3z" fill="#595959"/>
 <path d="M1086 617.5h7.5M1197.5 617.5h7.5M1201.2 613.8v7.5" stroke="#666" stroke-width="1.2"/>
 <path d="M1098.5 617.5h94" stroke="#b4b4b4" stroke-width="1"/>
 <path d="M1146.5 614.5v6" stroke="#b4b4b4" stroke-width="1"/>
 <rect x="1123.6" y="613" width="5.4" height="9.5" fill="#555"/>
</svg>
<svg class="a" style="left:515px;top:18px" width="30" height="30" viewBox="515 18 30 30">
 <path d="M524.5 24.5v14.8l3.5-3.4 2.6 5.6 2.3-1-2.5-5.4h4.8z" fill="#fff" stroke="#111" stroke-width="1" stroke-linejoin="round"/>
</svg>
</body></html>
